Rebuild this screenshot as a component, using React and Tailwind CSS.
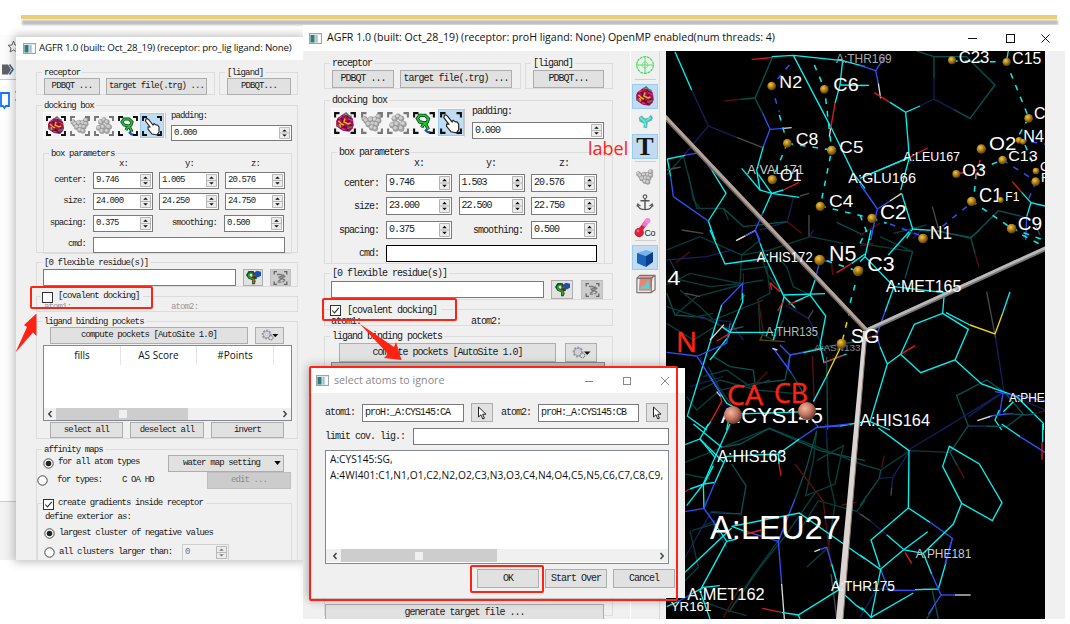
import React from "react";
import clsx from "clsx";

const MONO = "font-['Liberation_Mono','Noto_Sans_CJK_SC',monospace]";
const SANS = "font-['Open_Sans','Noto_Sans',sans-serif]";

/* ---------- widgets ---------- */

function Group({ title, className, children }) {
  return (
    <div className={clsx("border border-[#dcdcdc] shrink-0", className)}>
      {title && (
        <div className="ml-[5px] -mt-[7px] h-[12px] w-fit bg-[#f0f0f0] px-[2px] leading-[14px] whitespace-pre">{title}</div>
      )}
      {children}
    </div>
  );
}

function Btn({ className, children, dim }) {
  return (
    <div
      className={clsx(
        "flex shrink-0 items-center justify-center border whitespace-pre leading-none",
        dim ? "border-[#bfbfbf] bg-[#cccccc] text-[#8d8d8d]" : "border-[#adadad] bg-[#e1e1e1]",
        className
      )}
    >
      {children}
    </div>
  );
}

function Field({ className, children }) {
  return (
    <div className={clsx("flex shrink-0 items-center border bg-white pl-[2px] leading-none whitespace-pre", className)}>
      {children}
    </div>
  );
}

function Spin({ value, className, dim }) {
  return (
    <div className={clsx("flex shrink-0 items-center justify-between border p-px pl-[2px] leading-none", dim ? "border-[#cfcfcf] bg-[#f0f0f0] text-gray-500" : "border-[#7a7a7a] bg-white", className)}>
      <span>{value}</span>
      <svg viewBox="0 0 11 14" preserveAspectRatio="none" className="h-full w-[11px]">
        <path d="M.5.5h10v13H.5z M.5 7h10" fill="#ececec" stroke="#b4b4b4" />
        <path d="M3.2 5.2 5.5 2.8 7.8 5.2z M3.2 8.8 5.5 11.2 7.8 8.8z" fill={dim ? "#777" : "#111"} />
      </svg>
    </div>
  );
}

function Check({ on, className }) {
  return (
    <svg viewBox="0 0 11 11" className={clsx("size-[11px] shrink-0", className)}>
      <rect x=".5" y=".5" width="10" height="10" fill="#fff" stroke="#333" />
      {on && <path d="M2.3 5.5 4.5 7.9 8.8 2.8" fill="none" stroke="#333" strokeWidth="1.1" />}
    </svg>
  );
}

function Radio({ on, className }) {
  return (
    <svg viewBox="0 0 11 11" className={clsx("size-[11px] shrink-0", className)}>
      <circle cx="5.5" cy="5.5" r="4.7" fill="#fff" stroke="#333" strokeWidth=".9" />
      {on && <circle cx="5.5" cy="5.5" r="2.8" fill="#222" />}
    </svg>
  );
}

function AppIcon({ className }) {
  return (
    <svg viewBox="0 0 13 11" className={clsx("h-[11px] w-[13px] shrink-0", className)}>
      <rect x=".5" y=".5" width="12" height="10" fill="#dfe7ec" stroke="#9aa6af" />
      <rect x="1.5" y="2" width="4" height="7.5" fill="#2f7d74" />
      <rect x="6.5" y="2" width="2" height="7.5" fill="#a9bccb" />
      <rect x="9.3" y="2" width="2.4" height="7.5" fill="#fff" />
    </svg>
  );
}

function Scroll({ className, children }) {
  return (
    <div className={clsx("flex shrink-0 items-center justify-between bg-[#f0f0f0]", className)}>
      <svg viewBox="0 0 12 12" className="size-[12px] shrink-0"><path d="M7.5 3 4.8 6 7.5 9" fill="none" stroke="#444" strokeWidth="1.5" /></svg>
      <div className="h-full flex-1">{children}</div>
      <svg viewBox="0 0 12 12" className="size-[12px] shrink-0"><path d="M4.5 3 7.2 6 4.5 9" fill="none" stroke="#444" strokeWidth="1.5" /></svg>
    </div>
  );
}

/* ---------- icons ---------- */

const CORNERS = "M1 5V1H5 M15 1H19V5 M19 15V19H15 M5 19H1V15";

function Protein() {
  return (
    <g>
      <path d="M2 8 4 5 8 2 14 3 17 6 18 12 17 15 14 18 8 17 5 15 2 13z" fill="#a80f55" />
      <path d="M3 7 6 5 9 8 6 10 10 14 M12 3 15 7 11 10 17 13 M6 15 11 14 13 17" fill="none" stroke="#4f1030" strokeWidth="1.3" />
      <path d="M4 8 7 11 9 12 M10 6 9 9 13 11 15 10 M5 11 6 14" fill="none" stroke="#eba81a" strokeWidth="1.5" />
      <path d="M8 3 11 1 14 4 16 4 M2 12 5 13 M12 15 17 13" fill="none" stroke="#6b6b6b" strokeWidth="1.5" />
      <path d="M13 6 17 8 M7 15 10 16 M4 6 7 4" stroke="#e32a8d" strokeWidth="1.3" fill="none" />
    </g>
  );
}

function Balls({ points }) {
  return points.map(([x, y, r], i) => (
    <g key={i}>
      <circle cx={x} cy={y} r={r} fill="#a5a5a5" stroke="#858585" strokeWidth=".4" />
      <circle cx={x - r * 0.25} cy={y - r * 0.25} r={r * 0.6} fill="#cfcfcf" />
    </g>
  ));
}

const BLOB = [[3, 6, 2.4], [5, 8, 2.6], [9, 7, 2.8], [13, 7, 2.8], [16, 4, 2.5], [16, 8, 2.4], [7, 11, 2.8], [11, 11, 2.9], [14, 11, 2.4], [10, 14, 2.6], [13, 15, 2.4]];
const LOOSE = [[7, 6, 2.7], [10, 4, 2.4], [13, 6, 2.5], [5, 12, 2.7], [9, 11, 2.7], [15, 11, 2.7], [8, 15, 2.7], [13, 15, 2.7]];

function BoxIcon({ kind, className }) {
  const dim = kind === "blob" || kind === "loose";
  return (
    <svg viewBox="0 0 20 20" className={className}>
      {kind === "protein" && <Protein />}
      {kind === "blob" && <Balls points={BLOB} />}
      {kind === "loose" && <Balls points={LOOSE} />}
      {kind === "ligand" && (
        <g fill="none">
          <path d="M14 16 11 10 6 9 4 6 6 3 11 3 14 6 13 9 9 12 8 14" stroke="#063f10" strokeWidth="3" />
          <path d="M14 16 11 10 6 9 4 6 6 3 11 3 14 6 13 9 9 12 8 14" stroke="#1fc43b" strokeWidth="1.6" />
          <path d="M11 16 13 18 16 19" stroke="#2347c5" strokeWidth="2.2" />
        </g>
      )}
      <path d={CORNERS} fill="none" stroke={dim ? "#777" : "#101010"} strokeWidth="1.9" />
      {kind === "hand" && (
        <path d="M4 3C5 2 6 3 7 4L11 9 12 7.5 14 9 15.5 9 17 11 17 16 15 19 10 18 6 13 6 11 8 11 3.5 5z" fill="#fff" stroke="#222" strokeWidth="1.1" />
      )}
    </svg>
  );
}

function BoxToolbar({ className, cell, icon }) {
  return (
    <div className={clsx("flex shrink-0 items-center border border-[#fafafa] border-r-[#c8c8c8] bg-[#f5f5f5]", className)}>
      {["protein", "blob", "loose", "ligand"].map((k) => (
        <div key={k} className={clsx("flex items-center justify-center", cell)}><BoxIcon kind={k} className={icon} /></div>
      ))}
      <div className={clsx("flex h-full items-center justify-center border border-[#99ccf0] bg-[#c0dcf3]", cell)}><BoxIcon kind="hand" className={icon} /></div>
    </div>
  );
}

function FlexIcon() {
  return (
    <svg viewBox="0 0 20 18" className="h-[15px] w-[17px]">
      <path d="M10 17V11L5 9 3 6 5 3 9 3 11 6 10 9 14 9" fill="none" stroke="#0b5519" strokeWidth="3.4" />
      <path d="M10 16V11L5 9 4 6 6 4 9 4" fill="none" stroke="#20b53b" strokeWidth="1.4" />
      <path d="M11 3 14 1 19 2V7L15 9 11 7z" fill="#174fae" />
      <path d="M8 8 13 6 M11 11 12 15" stroke="#db2222" strokeWidth="1.8" />
    </svg>
  );
}

function GreyBoxIcon() {
  return (
    <svg viewBox="0 0 20 20" className="h-[14px] w-[15px]">
      <path d="M5 5H10L13 7 8 9 11 12 7 14 M13 5 16 8 12 10 16 13 13 16 M6 16 11 16" fill="none" stroke="#777" strokeWidth="1.9" />
      <path d={CORNERS} fill="none" stroke="#666" strokeWidth="1.9" />
    </svg>
  );
}

function GearIcon({ className }) {
  return (
    <svg viewBox="0 0 20 14" className={className}>
      <circle cx="7" cy="6" r="4.200" fill="#dedede" stroke="#9a9aa5" strokeWidth="2.4" strokeDasharray="2.1 1" />
      <circle cx="7" cy="6" r="3.6" fill="#dcdce0" stroke="#8e8e98" strokeWidth=".8" />
      <circle cx="7" cy="6" r="1.3" fill="#f5f5f5" stroke="#999" strokeWidth=".5" />
      <circle cx="11.5" cy="9.5" r="2.300" fill="#ddd" stroke="#888" strokeWidth="1.200" strokeDasharray="1.3 .6" />
      <path d="M13 5.5H19.5L16.2 9z" fill="#111" />
    </svg>
  );
}

function Pointer() {
  return (
    <svg viewBox="0 0 10 14" className="h-[14px] w-[10px]">
      <path d="M1.5 1V11L4 8.8 5.8 13 7.4 12.3 5.7 8.2H9z" fill="#fff" stroke="#222" strokeWidth="1" />
    </svg>
  );
}

/* ---------- left window ---------- */

function ParamRow({ label, values, mid, s, className }) {
  return (
    <div className={clsx("flex shrink-0 items-center", s.rowH, className)}>
      <div className={clsx("text-right whitespace-pre", s.label)}>{label}</div>
      {mid ? (
        <>
          <Spin value={values[0]} className={s.spin} />
          <div className={clsx("text-right whitespace-pre", s.mid)}>{mid}</div>
          <Spin value={values[1]} className={s.spin} />
        </>
      ) : (
        <div className={clsx("flex", s.gap)}>
          {values.map((v, i) => <Spin key={i} value={v} className={s.spin} />)}
        </div>
      )}
    </div>
  );
}

const SMALL = { rowH: "h-[17px]", label: "w-[42px] mr-[7px]", spin: "h-[17px] w-[60px]", gap: "gap-[6px]", mid: "w-[64px] mr-[7px]" };
const LARGE = { rowH: "h-[18px]", label: "w-[47px] mr-[7px]", spin: "h-[18px] w-[66px]", gap: "gap-[6.5px]", mid: "w-[71px] mr-[8px]" };

function LeftWindow() {
  return (
    <div className="absolute top-[37px] left-[16px] flex h-[523px] w-[287px] flex-col overflow-hidden bg-[#f0f0f0] shadow-[0_0_9px_2px_rgba(0,0,0,0.25)]">
      <div className={clsx("flex h-[23px] shrink-0 items-center bg-white pl-[7px] text-[9.8px] text-[#111]", SANS)}>
        <AppIcon className="mr-[3px]" />
        <span className="whitespace-pre tracking-[-0.2px]">AGFR 1.0 (built: Oct_28_19) (receptor: pro_lig ligand: None)</span>
      </div>
      <div className={clsx("flex flex-col pl-[20px] text-[9px] tracking-[-0.87px] text-[#1a1a1a]", MONO)}>
        <div className="mt-[12px] flex gap-[4px]">
          <Group title="receptor" className="h-[23px] w-[179px]">
            <div className="flex gap-[6px] pl-[7px]">
              <Btn className="h-[17px] w-[56px]">PDBQT ...</Btn>
              <Btn className="h-[17px] w-[101px]">target file(.trg) ...</Btn>
            </div>
          </Group>
          <Group title="[ligand]" className="h-[23px] w-[79px]">
            <Btn className="ml-[7px] h-[17px] w-[64px]">PDBQT...</Btn>
          </Group>
        </div>

        <Group title="docking box" className="mt-[10px] h-[148px] w-[262px]">
          <div className="mt-[1px] flex pl-[6px]">
            <BoxToolbar className="h-[27px] w-[123px]" cell="w-[24px]" icon="size-[20px]" />
            <div className="ml-[5px]">
              <div className="-mt-[2px] h-[13px] leading-[12px]">padding:</div>
              <Spin value="0.000" className="mt-[2px] h-[16px] w-[121px]" />
            </div>
          </div>
          <Group title="box parameters" className="mt-[12px] ml-[6px] h-[101px] w-[249px]">
            <div className="flex h-[10px] items-center leading-none">
              <span className="ml-[75px] w-[66px]">x:</span><span className="w-[66px]">y:</span><span>z:</span>
            </div>
            <ParamRow s={SMALL} label="center:" values={["9.746", "1.005", "20.576"]} className="mt-[3px]" />
            <ParamRow s={SMALL} label="size:" values={["24.000", "24.250", "24.750"]} className="mt-[4px]" />
            <ParamRow s={SMALL} label="spacing:" values={["0.375", "0.500"]} mid="smoothing:" className="mt-[5px]" />
            <div className="mt-[4px] flex h-[17px] items-center">
              <div className="mr-[7px] w-[42px] text-right">cmd:</div>
              <Field className="h-[16px] w-[192px] border-[#7a7a7a]" />
            </div>
          </Group>
        </Group>

        <Group title="[0 flexible residue(s)]" className="mt-[9px] h-[25px] w-[262px]">
          <div className="mt-[1px] flex pl-[6px]">
            <Field className="h-[17px] w-[193px] border-[#7a7a7a]" />
            <Btn className="ml-[7px] h-[17px] w-[20px]"><FlexIcon /></Btn>
            <Btn dim className="ml-[7px] h-[17px] w-[21px]"><GreyBoxIcon /></Btn>
          </div>
        </Group>

        <Group className="mt-[9px] h-[16px] w-[262px]">
          <div className="-mt-[6px] ml-[4px] flex h-[12px] w-[102px] items-center bg-[#f0f0f0]">
            <Check className="ml-px" />
            <span className="ml-[5px]">[covalent docking]</span>
          </div>
          <div className="flex h-[8px] items-center leading-none text-[#999]"><span className="ml-[7px] w-[127px]">atom1:</span><span>atom2:</span></div>
        </Group>

        <Group title="ligand binding pockets" className="mt-[9px] h-[118px] w-[262px]">
          <div className="flex pl-[13px]">
            <Btn className="h-[17px] w-[198px]">compute pockets [AutoSite 1.0]</Btn>
            <Btn className="ml-[7px] h-[17px] w-[29px]"><GearIcon className="h-[13px] w-[19px]" /></Btn>
          </div>
          <div className={clsx("ml-[6px] mt-px flex h-[76px] w-[249px] flex-col justify-between border border-[#828790] bg-white text-[10px] tracking-normal", SANS)}>
            <div className="flex h-[19px] items-center text-center text-[#111]">
              <span className="h-full w-[77px] border-r border-[#e5e5e5] leading-[19px]">fills</span>
              <span className="h-full w-[76px] border-r border-[#e5e5e5] leading-[19px]">AS Score</span>
              <span className="h-full w-[77px] border-r border-[#e5e5e5] leading-[19px]">#Points</span>
            </div>
            <Scroll className="h-[12px]">
              <div className="flex h-full w-[132px] items-center bg-[#cdcdcd] pl-[63px]"><div className="size-[8px] bg-[#f0f0f0]" /></div>
            </Scroll>
          </div>
          <div className="mt-px flex gap-[7px] pl-[13px]">
            <Btn className="h-[16px] w-[73px]">select all</Btn>
            <Btn className="h-[16px] w-[74px]">deselect all</Btn>
            <Btn className="h-[16px] w-[73px]">invert</Btn>
          </div>
        </Group>

        <Group title="affinity maps" className="mt-[10px] h-[130px] w-[262px]">
          <div className="flex h-[16px] items-center pl-[6px]">
            <Radio on />
            <span className="ml-[4px] w-[110px] whitespace-pre">for all atom types</span>
            <Btn className="h-[17px] w-[116px] pl-[12px]">
              water map setting
              <svg viewBox="0 0 8 5" className="ml-[14px] h-[4px] w-[7px]"><path d="M0 0H8L4 5z" /></svg>
            </Btn>
          </div>
          <div className="mt-[1px] flex h-[17px] items-center">
            <Radio />
            <span className="ml-[9px] w-[65px] whitespace-pre">for types:</span>
            <span className="w-[85px] whitespace-pre">C OA HD</span>
            <Btn dim className="h-[17px] w-[84px]">edit ...</Btn>
          </div>
          <Group className="mt-[14px] h-[80px] w-[255px]">
            <div className="-mt-[6px] ml-[5px] flex h-[12px] w-[163px] items-center bg-[#f0f0f0]">
              <Check on />
              <span className="ml-[4px] whitespace-pre">create gradients inside receptor</span>
            </div>
            <div className="mt-[2px] ml-[7px] h-[11px] leading-[11px]">define exterior as:</div>
            <div className="mt-[5px] ml-[6px] flex h-[11px] items-center"><Radio on /><span className="ml-[4px]">largest cluster of negative values</span></div>
            <div className="mt-[5px] ml-[6px] flex h-[17px] items-center">
              <Radio /><span className="ml-[4px] w-[123px] whitespace-pre">all clusters larger than:</span>
              <Spin dim value="0" className="h-[17px] w-[47px]" />
            </div>
          </Group>
        </Group>
      </div>
    </div>
  );
}

/* ---------- view tool strip ---------- */

function ViewTools() {
  const cell = "flex h-[25px] w-[26px] shrink-0 items-center justify-center";
  const on = "border border-[#99ccf0] bg-[#c0dcf3]";
  const sep = "h-px w-[21px] shrink-0 bg-[#cfcfcf]";
  return (
    <div className="flex w-[36px] shrink-0 flex-col border-l border-white bg-[#f0f0f0]">
      <div className="flex h-full w-[29px] flex-col items-center border-r border-[#dadada] pt-px">
        <div className={cell}>
          <svg viewBox="0 0 20 20" className="size-[20px]" fill="none" stroke="#41dc57">
            <circle cx="10" cy="10" r="8.3" strokeWidth="1.2" strokeDasharray="3 .7" />
            <path d="M10 1V19M1 10H19" strokeWidth=".9" /><circle cx="10" cy="10" r="3" strokeWidth=".5" />
          </svg>
        </div>
        <div className={clsx(sep, "mt-[2px]")} />
        <div className={clsx(cell, on, "mt-[4px]")}><svg viewBox="0 0 20 20" className="size-[22px]"><Protein /></svg></div>
        <div className={cell}>
          <svg viewBox="0 0 20 20" className="h-[15px] w-[15px]"><path d="M1 5 5 2 9 6 14 5 17 1 20 5 18 9 13 11 12 19 7 18 8 13 2 10z" fill="#46c4b5" /><path d="M3 5 9 10 10 17 M11 9 17 5" stroke="#8fe6da" strokeWidth="1.5" fill="none" /></svg>
        </div>
        <div className={clsx(cell, on, "font-['Liberation_Serif',serif] text-[26px] leading-none font-bold text-[#161616]")}>T</div>
        <div className={clsx(sep, "mt-[2px]")} />
        <div className={clsx(cell, "mt-[3px]")}><svg viewBox="0 1 20 18" className="h-[17px] w-[20px]"><Balls points={BLOB} /></svg></div>
        <div className={cell}>
          <svg viewBox="0 0 20 20" className="size-[18px]" fill="none" stroke="#555">
            <circle cx="10" cy="3" r="2" strokeWidth="1.2" /><path d="M10 5V18M5 7.5H15" strokeWidth="1.6" /><path d="M2 12C3 19 17 19 18 12M1 14 2 11 5 13.5M15 13.5 18 11 19 14" strokeWidth="1.3" />
          </svg>
        </div>
        <div className={cell}>
          <svg viewBox="0 0 22 20" className="h-[20px] w-[22px]">
            <path d="M5 14 13 3" stroke="#d51f49" strokeWidth="4.2" /><path d="M9.5 8 13.5 2.5" stroke="#f273cf" strokeWidth="4.2" />
            <circle cx="5.2" cy="14.5" r="4.7" fill="#d4213c" /><circle cx="13.7" cy="2.8" r="2.7" fill="#f58ad8" /><circle cx="4" cy="13" r="1.4" fill="#ef6d7b" />
            <text x="10.5" y="18" fontSize="9" fontFamily="Liberation Sans" fill="#222" textLength="11">Co</text>
          </svg>
        </div>
        <div className={sep} />
        <div className={clsx(cell, on, "mt-[4px]")}>
          <svg viewBox="0 0 20 20" className="size-[20px]"><path d="M2 5 11 2 18 4 11 8z" fill="#73b4ec" /><path d="M2 5 11 8V19L2 15z" fill="#1b63bb" /><path d="M11 8 18 4V14L11 19z" fill="#0d3d86" /></svg>
        </div>
        <div className={clsx(cell, "mt-px")}>
          <svg viewBox="0 0 22 20" className="h-[20px] w-[21px]">
            <path d="M5 2H19L16 17 4 17z" fill="#ef8277" /><path d="M5 15 8 11 10 12 14 5 15 15z" fill="#5cd2cf" />
            <path d="M2 4H17V19H2z M2 4 5 1H21L17 4 M21 1V16L17 19" fill="none" stroke="#777" strokeWidth="1.3" strokeLinejoin="round" />
          </svg>
        </div>
      </div>
    </div>
  );
}

/* ---------- 3D viewport ---------- */

const C = "#00f2f2", D = "#075252", B = "#3050f5", N = "#141e5a", R = "#dc1c1c", M = "#5a0e0e", W = "#d8d8d8", G = "#4a4a4a", Y = "#f0d800", K = "#053f3d";

/* Each tile holds bonds, dashed bonds, atoms and labels in thirds of a pixel from its origin. */
const TILES = [
  {
    at: [660, 40],
    lines: [
      [N, "95,150 145,258 70,348"], [N, "145,258 230,292"], [G, "230,292 307,322"], [D, "338,50 285,175 308,220"], [D, "240,178 285,174"], [M, "193,183 240,178"],
      [K, "70,348 110,505 190,505 205,540"], [K, "20,405 70,348"], [K, "85,400 100,480 120,505"], [N, "400,475 382,545 300,570"], [D, "382,545 250,560 190,505"], [M, "382,545 425,580"], [G, "447,525 447,590"], [D, "530,547 610,585"],
      [C, "45,35 95,150"], [R, "275,58 335,53"], [C, "335,50 400,46 548,62 615,80"], [C, "400,46 513,262 580,400 615,445"], [C, "548,62 540,135 525,190"], [C, "540,135 615,137"], [R, "525,190 512,265"], [W, "512,265 508,290"],
      [B, "308,220 330,268 310,320"], [C, "310,320 290,390 300,450 335,460 418,472"], [C, "245,385 300,450"], [B, "330,268 370,265"], [W, "370,265 395,263"], [C, "295,403 335,460 308,520"], [C, "335,460 370,450"], [R, "370,450 417,427"], [B, "308,520 285,572 300,600"], [W, "232,600 285,572"],
      [C, "22,357 75,346"], [B, "75,346 117,338 155,390"], [C, "155,390 198,460 145,543 165,600"], [B, "40,470 145,543"], [C, "22,357 32,410"], [B, "32,410 40,470"], [G, "20,390 62,381"], [G, "420,468 447,460"],
    ],
    dashes: [[C, "463,75 495,150"], [C, "497,175 515,330"], [B, "388,75 335,138"], [B, "345,175 358,215"], [C, "358,225 382,310"], [C, "382,310 515,330 481,498"], [C, "382,310 337,418"], [C, "481,498 615,530"]],
    atoms: [[335, 138, 13], [493, 148, 13], [382, 310, 13], [515, 331, 14], [337, 419, 14], [481, 499, 14]],
    labels: [["N2", 358, 145, 51, 68], ["C6", 520, 153, 54, 76], ["A:THR169", 528, 70, 36, 167, "#aaa"], ["C8", 407, 316, 51, 68], ["C5", 538, 338, 52, 72], ["A:VAL171", 262, 402, 38, 170, "#ccc"], ["O1", 360, 424, 52, 65], ["C4", 507, 502, 51, 73], ["A:GLU166", 565, 428, 43, 203]],
  },
  {
    at: [860, 20],
    lines: [
      [D, "170,93 222,110 320,110 405,195 330,295 280,268"], [D, "222,110 222,175"], [N, "222,175 222,237 280,268"], [N, "222,237 180,258"], [G, "217,560 235,625"], [K, "100,640 200,615"], [D, "232,632 332,655 415,572"], [D, "415,572 480,588"], [N, "480,588 520,600"], [G, "520,600 540,645"], [M, "0,645 60,610"], [N, "160,655 185,630"],
      [B, "0,136 47,152 55,190"], [B, "47,152 75,110"], [W, "55,190 62,235"], [C, "0,196 27,196"], [R, "43,218 90,247"], [C, "90,247 137,277 180,258"], [C, "137,277 148,412 122,510"], [C, "0,475 148,412"], [C, "30,462 148,412"], [R, "148,412 203,384"], [B, "0,492 52,567"], [B, "52,567 90,543"], [W, "90,543 125,520"], [C, "125,520 158,627 225,632"], [B, "52,567 32,660"], [C, "158,627 140,655"],
      [R, "457,485 485,517"], [C, "485,517 513,548 555,558"], [C, "513,548 500,590"], [B, "500,590 497,660"], [C, "445,93 440,120"],
    ],
    dashes: [[C, "276,123 440,126"], [C, "452,160 505,290"], [C, "505,295 477,345"], [B, "477,360 555,372"], [C, "343,515 350,450 428,420"], [R, "300,460 350,450"], [R, "360,420 350,470"], [B, "428,420 530,485"], [C, "495,375 528,452"], [B, "528,485 500,550"], [C, "335,543 455,625"], [B, "320,560 240,625"], [C, "36,595 80,610"], [B, "90,612 190,650"], [C, "455,625 550,660"], [C, "0,585 30,660"]],
    atoms: [[276, 121, 12], [440, 126, 12], [506, 295, 13], [477, 361, 10], [489, 365, 9], [364, 387, 14], [428, 420, 13], [528, 453, 10], [527, 485, 13], [289, 462, 12], [335, 544, 14], [422, 540, 9], [455, 626, 14], [36, 595, 14], [189, 655, 14]],
    labels: [["C23", 296, 128, 48, 92], ["C15", 457, 132, 48, 87], ["C", 522, 297, 48], ["N4", 490, 366, 48, 62], ["C13", 445, 423, 46, 88], ["O2", 387, 390, 55, 82], ["A:LEU167", 130, 424, 38, 170], ["O3", 307, 468, 49, 70], ["C1", 357, 547, 59, 70], ["F1", 436, 543, 40, 42], ["C9", 473, 630, 53, 73], ["C2", 60, 597, 59, 80], ["N1", 210, 657, 57, 66], ["C", 540, 452, 40], ["F", 543, 486, 40]],
  },
  {
    at: [660, 230],
    lines: [
      [K, "20,60 120,20 245,75 330,60 450,20 550,40"], [K, "20,165 90,130 240,160 245,75 300,30"], [K, "30,90 60,150 150,170 250,160 310,150"], [D, "20,190 45,255 130,262 210,300"], [K, "45,255 110,200 240,165"], [K, "60,180 120,230 160,270 310,210"], [K, "295,210 300,310 340,330 370,270"], [K, "20,280 100,330 165,290"], [K, "300,60 320,130 370,190"], [D, "160,380 210,410 280,420 285,460 375,450"], [K, "130,440 200,420 270,470 330,450"], [K, "120,480 180,450 290,480 400,490"], [D, "375,450 390,375 500,350 615,330"], [K, "285,460 180,480 110,540 80,500"], [K, "145,410 175,470 240,560"], [D, "500,380 503,600"], [K, "20,230 110,260 160,250"], [K, "450,195 400,170 380,110 340,70"], [K, "240,120 320,110 330,190 290,210"], [M, "250,130 250,165"], [M, "45,100 90,65"], [M, "295,210 310,310"], [M, "457,378 463,520"], [M, "280,470 322,425"], [N, "375,225 445,265 500,370"], [N, "20,90 140,80 215,60"], [N, "120,265 210,275 250,330"], [N, "90,470 190,440"], [N, "120,380 145,440"], [N, "450,20 460,0"], [G, "75,190 120,200"], [G, "210,300 250,290"], [G, "445,265 460,240"], [G, "65,0 130,10"], [G, "240,210 255,195"], [M, "515,100 518,135"], [M, "350,170 410,240"], ["#5b4a08", "375,335 300,330 310,310"],
      [C, "150,0 195,102 315,85"], [W, "228,32 255,18"], [B, "255,18 287,2 300,40"], [C, "300,40 317,85 372,200 340,330"], [C, "372,195 495,191"], [R, "330,158 335,180"], [R, "330,158 360,185"], [C, "372,200 405,233"], [R, "385,223 430,207"], [C, "405,215 450,195"], [R, "353,243 370,215"], [B, "480,90 465,150"], [C, "465,150 450,195 497,258 480,345 492,398 560,372"], [R, "492,398 550,375"], [B, "510,95 480,90"], [R, "530,128 575,100"], [C, "575,100 615,72"],
      [C, "185,225 82,558 140,600"], [B, "185,225 248,160 245,205"], [C, "248,190 248,215 205,320 150,390"], [B, "210,280 200,340 113,378"], [C, "185,290 210,307 340,307"], [R, "170,333 210,310"], [W, "150,330 192,284"], [B, "20,367 110,378 150,440"], [C, "150,440 200,520 230,535"], [B, "150,440 182,490"], [W, "170,485 182,500"], [R, "182,500 185,515 152,575"], [C, "152,575 135,600"], [B, "360,345 390,375 430,368"], [C, "430,368 490,355"], [B, "390,375 385,415 340,355 395,430"], [D, "395,430 430,490"], [W, "337,355 352,360"], [C, "230,552 360,548"], [C, "360,548 440,545"], [C, "460,515 500,438"], [Y, "500,438 545,345"], [B, "440,545 475,592 540,588"], [C, "540,588 615,575"], [C, "205,575 200,600"],
    ],
    dashes: [[C, "585,165 570,220"], [Y, "570,240 545,340"], [C, "500,92 594,124"]],
    atoms: [[479, 90, 16], [594, 124, 15], [545, 341, 15]],
    labels: [["4", 22, 165, 60, 40], ["A:HIS172", 290, 97, 44, 168], ["N5", 507, 94, 64, 82], ["A:THR135", 317, 319, 36, 157, "#bbb"], ["A:ASN133", 462, 362, 28, 140, "#888"], ["A:CYS145", 182, 580, 66, 307]],
  },
  {
    at: [860, 230],
    lines: [
      [K, "0,40 158,65 60,20"], [D, "158,65 135,145"], [D, "210,0 332,22 345,70"], [M, "345,70 357,112"], [D, "332,22 360,0"], [M, "0,48 40,40"], [G, "380,185 407,325"], [N, "407,325 432,485 325,560"], [D, "325,588 290,497 380,450 432,485 490,553 440,590 325,588"], [N, "432,485 245,600"], [N, "432,485 555,540"], [M, "535,548 555,542"],
      [C, "33,0 15,80 102,170 75,245"], [C, "0,95 15,80"], [C, "152,0 85,75"], [B, "75,245 50,315 60,350"], [C, "60,350 82,402 30,575 90,600"], [R, "20,325 50,315"], [C, "82,402 122,373"], [R, "122,373 165,347"], [C, "102,170 253,188 248,250 163,283 122,373 182,428 285,390 325,298 248,250"], [C, "258,248 330,285"], [Y, "330,285 405,312 428,250"], [C, "428,250 450,185"], [C, "285,390 365,462 470,500 550,580 550,600"], [B, "405,485 555,512"], [B, "430,485 418,555"], [C, "418,540 405,570 425,600"], [W, "352,572 395,558"], [B, "390,558 458,550"], [C, "460,515 430,545"], [D, "430,550 500,555 530,550"], [N, "145,0 165,15"],
    ],
    dashes: [[C, "487,15 550,48"], [C, "0,40 20,0"]],
    atoms: [[189, 26, 14], [-4, 122, 14], [455, -4, 14]],
    labels: [["C3", 22, 124, 59, 82], ["A:MET165", 78, 186, 47, 226], ["SG", -28, 340, 58, 86], ["A:HIS164", 0, 588, 49, 210], ["A:PHE", 447, 515, 38, 107]],
  },
  {
    at: [660, 424],
    lines: [
      [K, "75,115 328,13 615,125"], [D, "185,70 240,60 328,13 480,80 615,110"], [D, "215,120 258,185 243,270 150,265"], [N, "75,400 130,305 155,262 195,265"], [N, "130,305 165,290"], [K, "75,150 150,165"], [K, "90,320 115,430 75,470"], [K, "95,320 160,300 200,370"], [K, "355,350 275,460 205,565"], [K, "470,200 380,330 300,430 210,560"], [K, "470,20 460,110 437,215 525,180 550,65 470,110"], [D, "470,20 440,130 405,225"], [K, "500,40 505,150 525,240 505,370"], [K, "400,350 475,230 590,262 615,230"], [K, "120,530 205,560 260,575"], [K, "505,370 440,430"], [M, "405,120 490,232 513,430"], [M, "190,580 240,490"], [M, "545,243 590,235"], [G, "513,450 530,580"], [N, "498,0 500,50"], [N, "590,262 615,280"],
      [C, "100,0 185,70"], [C, "75,62 120,45 165,100"], [C, "145,0 120,45 190,115"], [C, "210,0 165,100 130,180 132,255"], [C, "80,245 130,180"], [R, "75,203 90,195"], [C, "90,195 132,180 160,125"], [C, "200,97 165,175 132,180"], [B, "75,263 132,253 165,175"], [B, "132,253 165,300"], [C, "165,300 200,352 230,345"], [C, "200,97 355,90 418,45"], [B, "418,45 470,10 570,0"], [R, "357,120 363,155"], [C, "355,90 357,120"], [C, "215,307 250,320"], [B, "250,320 355,352 405,225"], [C, "215,307 418,267 615,405"], [R, "260,330 303,318"], [C, "75,445 215,312"], [C, "200,352 120,500 150,585"], [B, "355,352 365,480"], [W, "365,480 373,585"], [W, "463,383 480,376"], [B, "480,376 500,370 515,420"], [C, "515,420 537,497 415,573 365,565"], [R, "307,553 365,565"], [C, "537,497 590,545 615,562"], [C, "20,548 60,530"], [B, "50,535 95,510"], [C, "95,510 130,490 180,485"], [C, "415,573 420,585"],
    ],
    dashes: [],
    atoms: [],
    labels: [["A:HIS163", 172, 114, 50, 207], ["A:LEU27", 150, 345, 98, 393], ["A:MET162", 82, 528, 50, 232], ["YR161", 32, 560, 40, 122], ["A:THR175", 513, 502, 42, 192]],
  },
  {
    at: [860, 424],
    lines: [
      [K, "0,120 62,138 150,80 270,85"], [D, "62,138 58,163 0,245"], [N, "150,80 98,160 95,190"], [N, "58,163 98,160"], [G, "95,190 93,215"], [M, "65,130 73,95"], [N, "150,75 275,0"], [D, "270,85 325,5"], [D, "270,85 292,125"], [M, "292,125 313,163"], [N, "325,5 380,7"], [D, "380,7 440,7"], [N, "30,290 80,332"], [K, "0,492 160,500 200,495"], [N, "50,495 0,580"], [D, "200,585 220,550"], [D, "217,500 235,585"], [G, "0,270 30,290"],
      [C, "55,12 147,80 145,252 210,295"], [C, "145,252 33,348 60,430"], [B, "210,295 277,343 258,415"], [C, "258,415 235,495 165,497"], [B, "277,343 255,420"], [B, "165,499 85,500 62,435"], [C, "62,435 130,378 203,323"], [C, "0,393 62,437 33,580 5,550"], [C, "80,332 133,378 190,388 280,300 305,238 248,127 268,67 358,120 426,236 397,290 305,238"], [R, "135,385 155,418"], [C, "190,388 215,450"], [B, "215,450 243,513 205,570"], [B, "243,513 285,513"], [W, "285,513 332,513"], [C, "33,580 160,507"], [C, "425,0 480,38"], [B, "480,38 555,85"], [C, "548,0 548,55"], [R, "546,55 546,107"],
    ],
    dashes: [],
    atoms: [],
    labels: [["A:PHE181", 167, 403, 39, 167, "#ccc"]],
  },
];

const tileTransform = ([x, y]) => `translate(${x} ${y}) scale(0.33333)`;

function Viewport() {
  return (
    <svg viewBox="666 51 379 568" className="h-[568px] w-[379px] shrink-0 bg-black" fontFamily="Liberation Sans, Arial, sans-serif">
      <defs>
        <radialGradient id="gold" cx=".38" cy=".35" r=".7"><stop offset="0" stopColor="#f0c65b" /><stop offset=".45" stopColor="#b78516" /><stop offset="1" stopColor="#4c3505" /></radialGradient>
        <radialGradient id="pink" cx=".38" cy=".35" r=".7"><stop offset="0" stopColor="#f3b7a2" /><stop offset=".5" stopColor="#c67863" /><stop offset="1" stopColor="#5c2f25" /></radialGradient>
      </defs>
      {TILES.map((t, i) => (
        <g key={i} transform={tileTransform(t.at)} fill="none" strokeWidth="4">
          {t.lines.map(([c, p], j) => <polyline key={j} points={p} stroke={c} />)}
          {t.dashes.map(([c, p], j) => <polyline key={j} points={p} stroke={c} strokeWidth="4.5" strokeDasharray="17 21" />)}
        </g>
      ))}
      <g fill="none">
        <path d="M664 116 866 330" stroke="#6f645f" strokeWidth="4.6" /><path d="M665 116 867 330" stroke="#b3a39b" strokeWidth="3" />
        <path d="M866 331 1047 248" stroke="#777" strokeWidth="4.6" /><path d="M866 330 1047 247" stroke="#b9b9b9" strokeWidth="2.8" />
        <path d="M863 331H867L843 619H836z" fill="#d9d5d3" /><path d="M867 331 843 619" stroke="#94796b" strokeWidth="1" />
      </g>
      {TILES.map((t, i) => (
        <g key={i} transform={tileTransform(t.at)}>
          {t.labels.map(([s, x, y, size, w, fill], j) => (
            <text key={j} x={x} y={y} fontSize={size} textLength={w} lengthAdjust="spacingAndGlyphs" fill={fill || "#fff"}>{s}</text>
          ))}
          {t.atoms.map(([x, y, r], j) => <circle key={j} cx={x} cy={y} r={r} fill="url(#gold)" />)}
        </g>
      ))}
      <circle cx="733" cy="415" r="9" fill="url(#pink)" />
      <circle cx="807" cy="411" r="9" fill="url(#pink)" />
      <g fill="#ff2314" fontFamily="Open Sans, Noto Sans, sans-serif" fontSize="27" stroke="#ff2314" strokeWidth=".4">
        <text x="676" y="352" textLength="21" lengthAdjust="spacingAndGlyphs">N</text>
        <text x="727" y="405" textLength="36" lengthAdjust="spacingAndGlyphs">CA</text>
        <text x="774" y="403" textLength="34" lengthAdjust="spacingAndGlyphs">CB</text>
      </g>
    </svg>
  );
}

/* ---------- right window ---------- */

function RightWindow() {
  return (
    <div className="absolute top-[25px] left-[303px] flex h-[594px] w-[762px] flex-col overflow-hidden bg-[#f0f0f0]">
      <div className={clsx("flex h-[26px] shrink-0 items-center bg-white pl-[6px] text-[10.6px] text-[#111]", SANS)}>
        <AppIcon className="mr-[5px]" />
        <span className="w-[641px] shrink-0 whitespace-pre">AGFR 1.0 (built: Oct_28_19) (receptor: proH ligand: None) OpenMP enabled(num threads: 4)</span>
        <svg viewBox="0 0 88 12" className="h-[12px] w-[88px] shrink-0" fill="none" stroke="#111">
          <path d="M0 6.5H9" /><rect x="38.5" y="2.5" width="8" height="8" /><path d="M73.5 2.5 81.500 10.5M81.500 2.5 73.5 10.5" />
        </svg>
      </div>
      <div className="flex flex-1">
        <div className={clsx("flex w-[327px] shrink-0 flex-col overflow-hidden pl-[21px] text-[10px] tracking-[-1px] text-[#1a1a1a]", MONO)}>
          <div className="mt-[12px] flex gap-[4px]">
            <Group title="receptor" className="h-[26px] w-[197px]">
              <div className="mt-[1px] flex gap-[6px] pl-[7px]">
                <Btn className="h-[18px] w-[62px]">PDBQT ...</Btn>
                <Btn className="h-[18px] w-[112px]">target file(.trg) ...</Btn>
              </div>
            </Group>
            <Group title="[ligand]" className="h-[26px] w-[88px]">
              <Btn className="mt-[1px] ml-[7px] h-[18px] w-[71px]">PDBQT...</Btn>
            </Group>
          </div>
          <Group title="docking box" className="mt-[11px] h-[164px] w-[289px]">
            <div className="mt-[2px] flex pl-[6px]">
              <BoxToolbar className="h-[29px] w-[134px]" cell="w-[26.4px]" icon="size-[22px]" />
              <div className="ml-[7px]">
                <div className="-mt-[2px] h-[13px] leading-[12px]">padding:</div>
                <Spin value="0.000" className="mt-[3px] h-[17px] w-[132px]" />
              </div>
            </div>
            <Group title="box parameters" className="mt-[13px] ml-[6px] h-[112px] w-[274px]">
              <div className="flex h-[12px] items-center leading-none">
                <span className="ml-[82px] w-[72px]">x:</span><span className="w-[73px]">y:</span><span>z:</span>
              </div>
              <ParamRow s={LARGE} label="center:" values={["9.746", "1.503", "20.576"]} className="mt-[4px]" />
              <ParamRow s={LARGE} label="size:" values={["23.000", "22.500", "22.750"]} className="mt-[5px]" />
              <ParamRow s={LARGE} label="spacing:" values={["0.375", "0.500"]} mid="smoothing:" className="mt-[6px]" />
              <div className="mt-[6px] flex h-[17px] items-center">
                <div className="mr-[7px] w-[47px] text-right">cmd:</div>
                <Field className="h-[17px] w-[211px] border-black" />
              </div>
            </Group>
          </Group>
          <Group title="[0 flexible residue(s)]" className="mt-[9px] h-[27px] w-[289px]">
            <div className="mt-px flex items-center pl-[6px]">
              <Field className="h-[17px] w-[213px] border-[#7a7a7a]" />
              <Btn className="ml-[7px] h-[19px] w-[22px]"><FlexIcon /></Btn>
              <Btn dim className="ml-[8px] h-[19px] w-[22px]"><GreyBoxIcon /></Btn>
            </div>
          </Group>
          <Group className="mt-[9px] h-[17px] w-[289px]">
            <div className="-mt-[6px] ml-[5px] flex h-[12px] w-[111px] items-center bg-[#f0f0f0]">
              <Check on />
              <span className="ml-[6px] whitespace-pre">[covalent docking]</span>
            </div>
            <div className="flex h-[11px] items-center leading-none"><span className="ml-[6px] w-[140px]">atom1:</span><span>atom2:</span></div>
          </Group>
          <Group title="ligand binding pockets" className="mt-[10px] h-[280px] w-[289px]">
            <div className="mt-px flex pl-[14px]">
              <Btn className="h-[19px] w-[217px]">compute pockets [AutoSite 1.0]</Btn>
              <Btn className="ml-[9px] h-[19px] w-[32px]"><GearIcon className="h-[14px] w-[20px]" /></Btn>
            </div>
            <div className="ml-[6px] h-[234px] w-[274px] border border-[#8a8a8a] bg-[#c8c8c8]" />
            <Btn className="mt-[8px] h-[18px] w-[279px]">generate target file ...</Btn>
          </Group>
        </div>
        <ViewTools />
        <Viewport />
        <div className="flex-1 bg-[#f0f0f0]" />
      </div>
    </div>
  );
}

/* ---------- dialog ---------- */

function IgnoreDialog() {
  return (
    <div className={clsx("absolute top-[368px] left-[310px] flex h-[230px] w-[375px] flex-col bg-[#f0f0f0] text-[10px] tracking-[-1px] text-[#1a1a1a] shadow-[0_0_9px_2px_rgba(0,0,0,0.3)]", MONO)}>
      <div className={clsx("flex h-[25px] shrink-0 items-center bg-white pl-[6px] text-[10.6px] tracking-[0.05px] text-[#888]", SANS)}>
        <AppIcon className="mr-[5px]" />
        <span className="w-[251px]">select atoms to ignore</span>
        <svg viewBox="0 0 88 12" className="h-[12px] w-[88px]" fill="none" stroke="#888">
          <path d="M0 6.5H8" /><rect x="38.5" y="2.5" width="7" height="7" /><path d="M76 2 84 10M84 2 76 10" />
        </svg>
      </div>
      <div className="mt-[10px] flex h-[19px] items-center pl-[15px]">
        <span className="w-[37px]">atom1:</span>
        <Field className="h-[18px] w-[102px] border-[#7a7a7a]">proH:_A:CYS145:CA</Field>
        <Btn className="ml-[7px] h-[19px] w-[22px]"><Pointer /></Btn>
        <span className="ml-[8px] w-[37px]">atom2:</span>
        <Field className="h-[18px] w-[101px] border-[#7a7a7a]">proH:_A:CYS145:CB</Field>
        <Btn className="ml-[7px] h-[19px] w-[22px]"><Pointer /></Btn>
      </div>
      <div className="mt-[6px] flex h-[17px] items-center pl-[15px]">
        <span className="w-[88px] whitespace-pre">limit cov. lig.:</span>
        <Field className="h-[17px] w-[256px] border-[#7a7a7a]" />
      </div>
      <div className={clsx("mt-[5px] ml-[15px] flex h-[114px] w-[344px] shrink-0 flex-col justify-between overflow-hidden border border-[#828790] bg-white pb-px text-[10.2px] tracking-normal text-[#111]", SANS)}>
        <div className="pl-[4px] leading-[16px] whitespace-pre">
          <div>A:CYS145:SG,</div>
          <div className="tracking-[0.09px]">A:4WI401:C1,N1,O1,C2,N2,O2,C3,N3,O3,C4,N4,O4,C5,N5,C6,C7,C8,C9,</div>
        </div>
        <Scroll className="h-[13px] pl-[3px]">
          <div className="flex h-full w-[156px] items-center bg-[#cdcdcd] pl-[74px]"><div className="size-[8px] bg-[#f0f0f0]" /></div>
        </Scroll>
      </div>
      <div className="mt-[5px] flex gap-[6px] pl-[167px]">
        <Btn className="h-[19px] w-[62px]">OK</Btn>
        <Btn className="h-[19px] w-[62px]">Start Over</Btn>
        <Btn className="h-[19px] w-[62px]">Cancel</Btn>
      </div>
    </div>
  );
}

/* ---------- page ---------- */

export default function App() {
  return (
    <div className="relative h-[624px] w-[1070px] overflow-hidden bg-white">
      <div className="absolute top-[35px] left-0 h-[525px] w-[20px] bg-white">
        <div className="h-[45px] border-b border-[#c8c8c8] bg-[#fcfcfc]">
          <svg viewBox="0 0 20 45" className="h-[45px] w-[20px]">
            <path d="M13.5 6 15 10 19 10.3 16 13 17 17 13.5 15 10 17 11 13 8 10.3 12 10z" fill="none" stroke="#666" />
            <path d="M2 29.5H8L11 34.5 8 39.5H2z" fill="#606266" /><path d="M9.5 29.5 13 34.5 9.5 39.5" fill="none" stroke="#315f91" strokeWidth="1.5" />
          </svg>
        </div>
        <svg viewBox="0 0 20 40" className="h-[40px] w-[20px] bg-white" fill="none" stroke="#1677ff"><path d="M1 13H9V26H6L4.5 28 3 26H1z" strokeWidth="1.8" /><path d="M16 11V13M16 19V21" /></svg>
        <div className="h-[381px] bg-[#fdfdfd]" />
        <div className="h-[59px] border-t border-[#ccc] bg-[#f2f2f2]" />
      </div>
      <div className="absolute top-[15px] left-[21px] h-[4px] w-[1036px] bg-[#ebcf72]" />
      <div className="absolute top-[20px] left-[22px] h-[5px] w-[1036px] bg-[#bdbdbd] blur-[1px]" />

      <LeftWindow />
      <RightWindow />
      <IgnoreDialog />

      <span className={clsx("absolute top-[135px] left-[588px] text-[18px] leading-[27px] text-[#ff2314]", SANS)}>label</span>
      <div className="absolute top-[286px] left-[30px] h-[23px] w-[123px] rounded-[2px] border-2 border-[#ff2314]" />
      <div className="absolute top-[298px] left-[322px] h-[23px] w-[135px] rounded-[2px] border-2 border-[#ff2314]" />
      <div className="absolute top-[366px] left-[309px] h-[235px] w-[369px] rounded-[2px] border-2 border-[#ff2314]" />
      <div className="absolute top-[565px] left-[470px] h-[28px] w-[74px] rounded-[2px] border-2 border-[#ff2314]" />
      <svg viewBox="0 0 24 42" className="absolute top-[312px] left-[14px] h-[42px] w-[24px]"><path d="M1.5 40.5 13 15 10 13 22.5 1.5V24L19 20.5z" fill="#ff2314" /></svg>
      <svg viewBox="0 0 46 40" className="absolute top-[323px] left-[358px] h-[40px] w-[46px]"><path d="M2 1 36 24 38 19 43.5 37 26 35 30 31z" fill="#ff2314" /></svg>
    </div>
  );
}
